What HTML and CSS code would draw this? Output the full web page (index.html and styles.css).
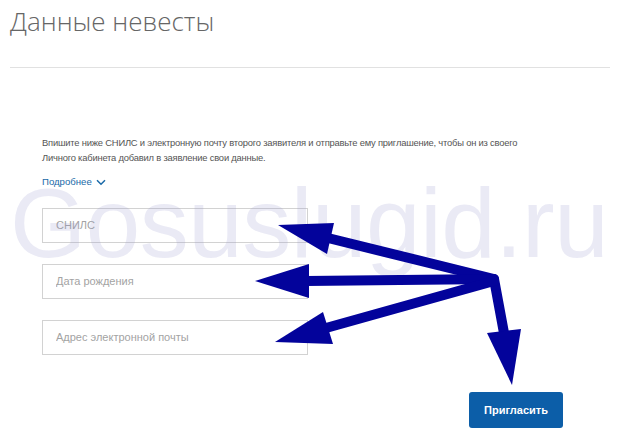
FILE: index.html
```html
<!DOCTYPE html>
<html lang="ru">
<head>
  <meta charset="UTF-8">
  <title>Данные невесты</title>
  <link rel="stylesheet" href="styles.css">
</head>
<body>
  <div class="page">
    <h1 class="title">Данные невесты</h1>
    <hr class="divider">

    <div class="content">
      <p class="hint">Впишите ниже СНИЛС и электронную почту второго заявителя и отправьте ему приглашение, чтобы он из своего Личного кабинета добавил в заявление свои данные.</p>
      <a class="more" href="#">Подробнее
        <svg width="10" height="7" viewBox="0 0 10 7"><path d="M1 1.2l4 4 4-4" fill="none" stroke="currentColor" stroke-width="1.5"/></svg>
      </a>

      <div class="fields">
        <input class="field" type="text" placeholder="СНИЛС">
        <input class="field" type="text" placeholder="Дата рождения">
        <input class="field" type="text" placeholder="Адрес электронной почты">
      </div>

      <div class="actions">
        <button class="btn">Пригласить</button>
      </div>
    </div>
  </div>

  <!-- site watermark and the pointer arrows drawn over the form -->
  <div class="watermark">Gosuslugid.ru</div>
  <svg class="arrows" width="620" height="446" viewBox="0 0 620 446">
    <g fill="none" stroke="#03039b" stroke-width="10" stroke-linejoin="round" stroke-linecap="round">
      <path d="M328 238 L494 279 L504 333"/>
      <path d="M306 281 L494 279"/>
      <path d="M326 328 L494 281"/>
    </g>
    <g fill="#03039b">
      <polygon points="278,225 334,223 327,254"/>
      <polygon points="255,281 309,264 309,298"/>
      <polygon points="275,342 323,312 333,344"/>
      <polygon points="487,333 521,329 512,385"/>
    </g>
  </svg>
</body>
</html>
```

FILE: styles.css
```css
body {
  margin: 0;
  background: #fff;
  font-family: "Liberation Sans", Arial, sans-serif;
  color: #555;
}

.page {
  width: 600px;
  padding: 0 10px;
}

.title {
  margin: 0;
  padding-top: 4px;
  font-family: "Open Sans", sans-serif;
  font-weight: 300;
  font-size: 26px;
  line-height: 34px;
  color: #666;
}

.divider {
  margin: 29px 0 0;
  border: none;
  border-top: 1px solid #e1e1e1;
}

.content {
  width: 521px;
  margin: 67px 0 0 32px;
}

.hint {
  max-width: 482px;
  margin: 0;
  font-size: 9.4px;
  letter-spacing: -0.2px;
  line-height: 15px;
  color: #555;
}

.more {
  display: inline-flex;
  align-items: center;
  gap: 4px;
  margin-top: 11px;
  font-size: 9.6px;
  line-height: 12px;
  color: #1a6aa8;
  text-decoration: none;
}

.fields {
  display: flex;
  flex-direction: column;
  gap: 21px;
  margin-top: 19px;
}

.field {
  box-sizing: border-box;
  width: 266px;
  height: 35px;
  padding: 0 13px 2px;
  border: 1px solid #d2d2d2;
  font-family: "Liberation Sans", Arial, sans-serif;
  font-size: 11px;
  outline: none;
}

.field::placeholder {
  color: #a3a3a3;
}

.actions {
  display: flex;
  justify-content: flex-end;
  margin-top: 37px;
}

.btn {
  width: 94px;
  height: 36px;
  border: none;
  border-radius: 3px;
  background: #0c5ea8;
  color: #fff;
  font-family: "Liberation Sans", Arial, sans-serif;
  font-weight: bold;
  font-size: 11px;
}

.watermark {
  position: absolute;
  left: 10px;
  top: 188px;
  font-family: "Liberation Sans", Arial, sans-serif;
  font-size: 98px;
  line-height: 70px;
  color: rgba(150, 150, 205, 0.2);
  letter-spacing: -0.5px;
  pointer-events: none;
}

.arrows {
  position: absolute;
  left: 0;
  top: 0;
  pointer-events: none;
}
```
